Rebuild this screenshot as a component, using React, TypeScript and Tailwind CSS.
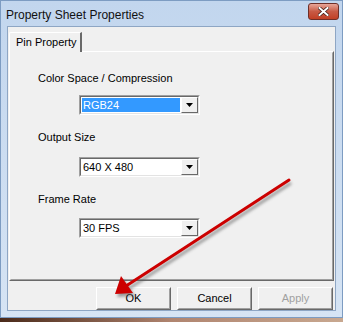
import React from "react";

const font = { fontFamily: '"Liberation Sans", Arial, sans-serif' };

function Combo({ value, selected }: { value: string; selected?: boolean }) {
  return (
    <div className="w-[121px] h-[20px] flex border border-t-[#a0a0a0] border-l-[#a0a0a0] border-r-white border-b-white">
      <div className="flex-1 flex border border-t-[#696969] border-l-[#696969] border-r-[#e3e3e3] border-b-[#e3e3e3] bg-white">
        <div className="flex-1 flex items-center p-[1px]">
          <span
            className={
              selected
                ? "flex-1 h-full flex items-center pl-[1px] bg-[#3399ff] text-white"
                : "flex-1 h-full flex items-center pl-[1px] text-black"
            }
          >
            {value}
          </span>
        </div>
        <div className="w-[17px] flex items-center justify-center bg-[#f0f0f0] border border-t-white border-l-white border-r-[#696969] border-b-[#696969]">
          <svg width="7" height="4" viewBox="0 0 7 4">
            <polygon points="0,0 7,0 3.5,4" fill="#000" />
          </svg>
        </div>
      </div>
    </div>
  );
}

function Btn({ label, disabled }: { label: string; disabled?: boolean }) {
  return (
    <div className="w-[75px] h-[23px] border border-t-white border-l-white border-r-[#696969] border-b-[#696969] bg-[#f0f0f0]">
      <div
        className={
          "w-full h-full flex items-center justify-center border border-t-[#f0f0f0] border-l-[#f0f0f0] border-r-[#a0a0a0] border-b-[#a0a0a0] " +
          (disabled ? "text-[#a0a0a0]" : "text-black")
        }
      >
        {label}
      </div>
    </div>
  );
}

export default function App() {
  return (
    <div className="w-[343px] h-[322px] relative flex flex-col text-[11px] whitespace-nowrap" style={font}>
      <div className="h-[318px] flex flex-col bg-gradient-to-b from-[#c2d6ee] to-[#d6e4f4] border border-[#7d9cc2]">
        <div className="h-[25px] flex items-start justify-between pl-[5px] pr-[3px]">
          <span className="text-[12px] text-[#111] mt-[5px]">Property Sheet Properties</span>
          <div className="w-[31px] h-[17px] mt-[2px] rounded-[3px] border border-[#6e2f28] bg-gradient-to-b from-[#e7a598] via-[#c75a45] to-[#c13f24] flex items-center justify-center">
            <svg width="11" height="9" viewBox="0 0 11 9">
              <path d="M1.5 1 L9.5 8 M9.5 1 L1.5 8" stroke="#3a1a15" strokeWidth="3.4" strokeLinecap="square" />
              <path d="M1.5 1 L9.5 8 M9.5 1 L1.5 8" stroke="#fff" strokeWidth="2" strokeLinecap="square" />
            </svg>
          </div>
        </div>
        <div className="flex-1 mx-[6px] mb-[6px] bg-[#f0f0f0] border border-[#8ea6c4] flex flex-col pt-[5px] px-[1px]">
          <div className="flex">
            <div className="w-[73px] h-[20px] bg-[#f0f0f0] border-t border-l border-white border-r-2 border-r-[#696969] rounded-tl-[2px] flex items-center pl-[6px] relative z-10 mb-[-1px]">
              Pin Property
            </div>
          </div>
          <div className="w-[325px] h-[230px] border border-t-white border-l-white border-r-[#696969] border-b-[#696969]">
            <div className="w-full h-full border border-t-[#f0f0f0] border-l-[#f0f0f0] border-r-[#a0a0a0] border-b-[#a0a0a0] flex flex-col pl-[27px] pt-[17px]">
              <div className="h-[16px] flex items-center">Color Space / Compression</div>
              <div className="pl-[41px] mt-[9px]">
                <Combo value="RGB24" selected />
              </div>
              <div className="h-[16px] flex items-center mt-[14px]">Output Size</div>
              <div className="pl-[41px] mt-[12px]">
                <Combo value="640 X 480" />
              </div>
              <div className="h-[16px] flex items-center mt-[14px]">Frame Rate</div>
              <div className="pl-[41px] mt-[11px]">
                <Combo value="30 FPS" />
              </div>
            </div>
          </div>
          <div className="flex justify-end gap-[6px] mt-[6px] pr-[1px]">
            <Btn label="OK" />
            <Btn label="Cancel" />
            <Btn label="Apply" disabled />
          </div>
        </div>
      </div>
      <div className="h-[4px] bg-gradient-to-r from-[#4a2a1a] via-[#b08570] to-[#c8a890]" />
      <svg className="absolute left-0 top-0 pointer-events-none" width="343" height="322">
        <defs>
          <filter id="sh" x="-20%" y="-20%" width="140%" height="140%">
            <feGaussianBlur stdDeviation="1.5" />
          </filter>
        </defs>
        <g transform="translate(2,3)" filter="url(#sh)" opacity="0.55">
          <line x1="289" y1="180" x2="126" y2="286" stroke="#555" strokeWidth="3" />
          <polygon points="115,294 121,276 133,293" fill="#555" />
        </g>
        <line x1="289" y1="180" x2="126" y2="286" stroke="#cc0000" strokeWidth="3" strokeLinecap="round" />
        <polygon points="115,294 121,276 133,293" fill="#cc0000" />
      </svg>
    </div>
  );
}
